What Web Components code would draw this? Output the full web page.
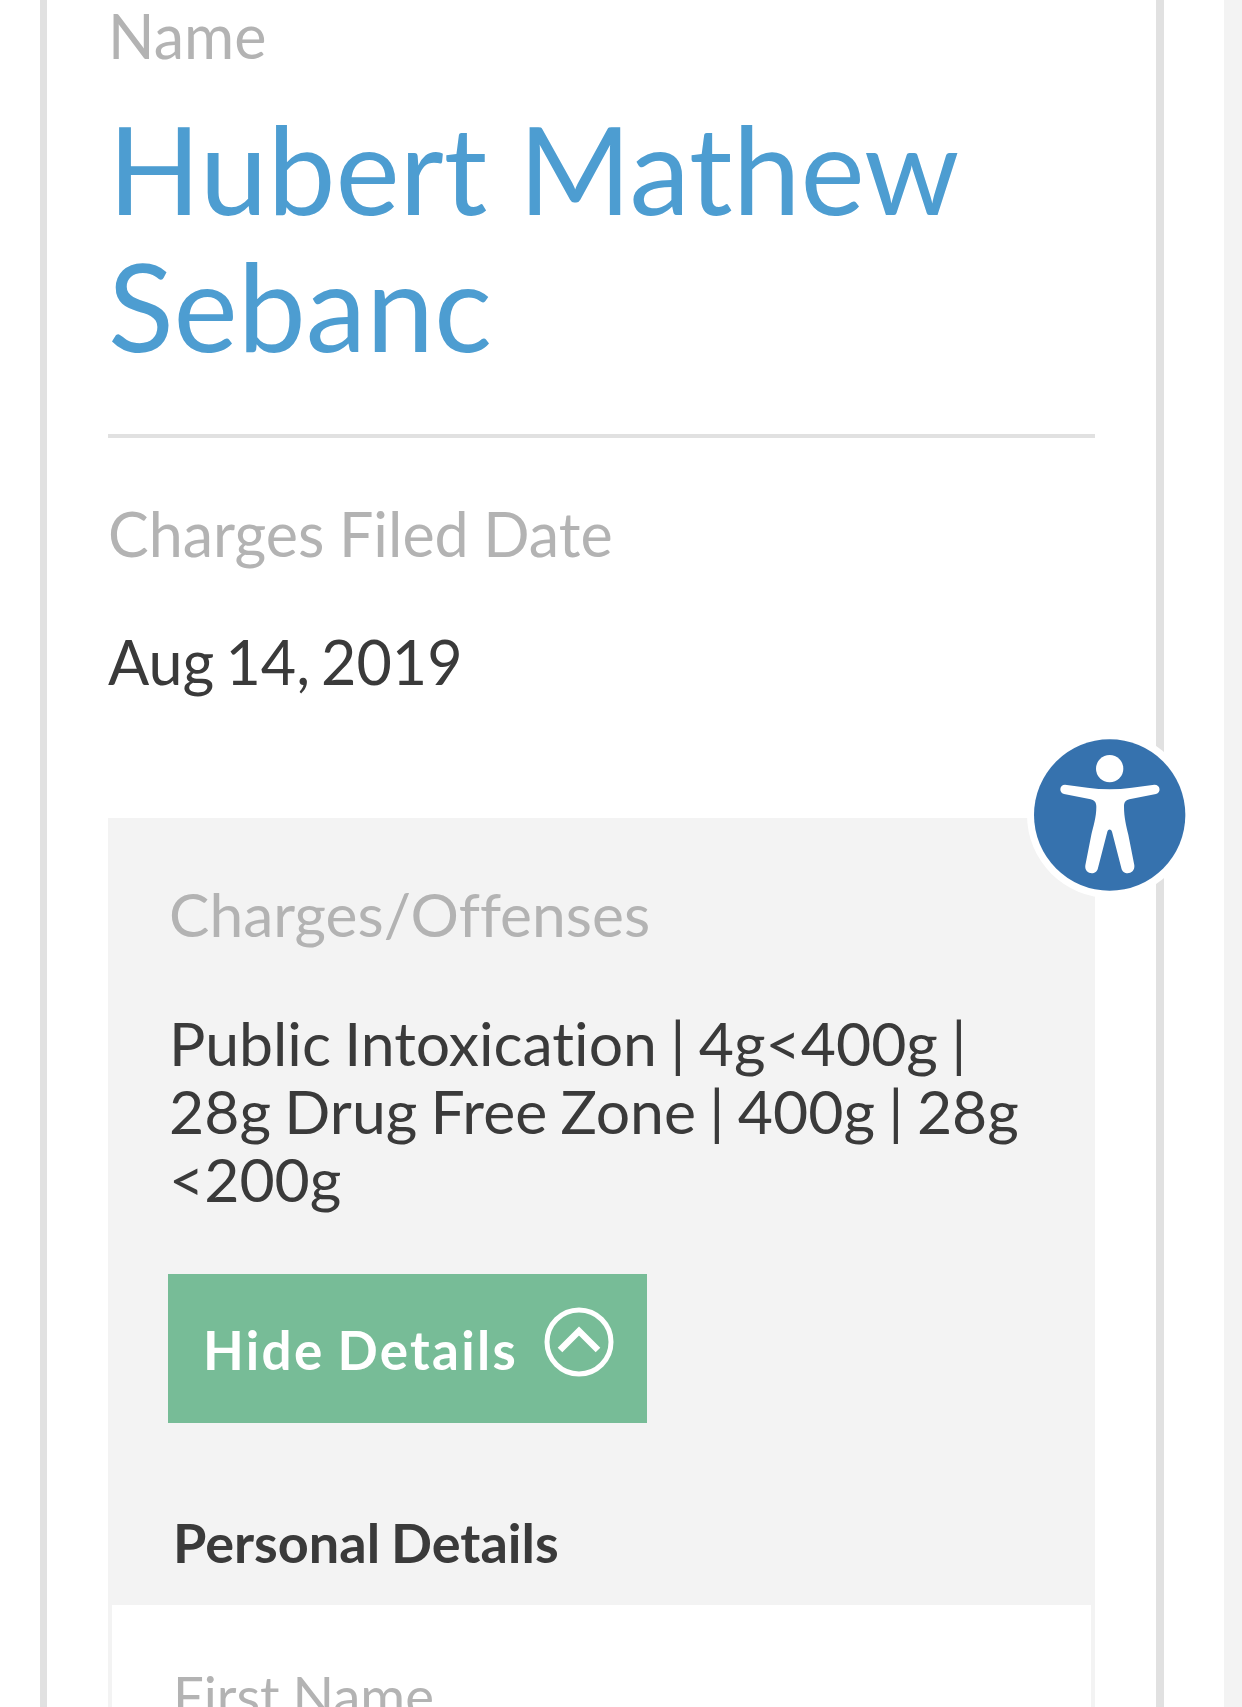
<!DOCTYPE html>
<html lang="en">
<head>
<meta charset="utf-8">
<title>Record</title>
<style>
  html, body { margin: 0; padding: 0; background: #f3f3f3; }
  body { height: 1707px; overflow: hidden; font-family: Lato, "Open Sans", sans-serif; color: #3a3a3a; font-variant-ligatures: none; word-spacing: -2.2px; }
</style>
</head>
<body>
<record-page>
  <record-field label="Name" kind="title">Hubert Mathew Sebanc</record-field>
  <record-divider></record-divider>
  <record-field label="Charges Filed Date">Aug 14, 2019</record-field>
  <charges-panel label="Charges/Offenses" text="Public Intoxication | 4g&lt;400g | 28g Drug Free Zone | 400g | 28g &lt;200g">
    <details-toggle label="Hide Details"></details-toggle>
    <span slot="heading">Personal Details</span>
    <record-field slot="details" label="First Name" style="--label-size: 54.5px"></record-field>
  </charges-panel>
</record-page>
<a11y-button></a11y-button>

<script>
/**
 * RecordPage - white column with the bordered card inside it.
 */
class RecordPage extends HTMLElement {
  constructor() {
    super();
    this.attachShadow({ mode: 'open' });
    this.shadowRoot.innerHTML = `
      <style>
        :host {
          display: block;
          box-sizing: border-box;
          width: 1224px;
          height: 1707px;
          overflow: hidden;
          padding: 0 60px 0 40px;
          background: #fff;
        }
        .card {
          box-sizing: border-box;
          min-height: 100%;
          border: solid #e1e1e1;
          border-width: 0 8px 0 7px;
          padding: 0 61px;
          background: #fff;
        }
      </style>
      <div class="card"><slot></slot></div>
    `;
  }
}

/**
 * RecordField - grey label with its value under it.
 */
class RecordField extends HTMLElement {
  constructor() {
    super();
    this.attachShadow({ mode: 'open' });
  }

  connectedCallback() {
    const label = this.getAttribute('label') || '';
    const title = this.getAttribute('kind') === 'title';
    this.shadowRoot.innerHTML = `
      <style>
        :host { display: block; }
        .label {
          font-size: var(--label-size, 61px);
          line-height: 72px;
          word-spacing: -1.1px;
          color: #b3b3b3;
        }
        .value {
          font-size: ${title ? '121.5px' : '61px'};
          line-height: ${title ? '137px' : '68px'};
          word-spacing: ${title ? '0' : '-4.5px'};
          color: ${title ? '#4d9dd1' : '#3a3a3a'};
          margin-top: ${title ? '28px' : '58px'};
        }
      </style>
      <div class="label">${label}</div>
      <div class="value"><slot></slot></div>
    `;
  }
}

class RecordDivider extends HTMLElement {
  constructor() {
    super();
    this.attachShadow({ mode: 'open' });
    this.shadowRoot.innerHTML = `
      <style>
        :host { display: block; height: 4px; background: #e1e1e1; margin: 60px 0 60px; }
      </style>
    `;
  }
}

/**
 * ChargesPanel - grey block with offenses, the toggle and the details.
 */
class ChargesPanel extends HTMLElement {
  constructor() {
    super();
    this.attachShadow({ mode: 'open' });
  }

  connectedCallback() {
    const label = this.getAttribute('label') || '';
    const text = (this.getAttribute('text') || '').replace(/</g, '&lt;');
    this.shadowRoot.innerHTML = `
      <style>
        :host {
          display: block;
          margin-top: 122px;
          padding: 60px 4px 0;
          background: #f3f3f3;
        }
        .top { padding: 0 56px 0 57px; }
        .label { font-size: 60.5px; line-height: 72px; color: #b3b3b3; }
        .text { font-size: 60.7px; line-height: 68px; color: #3a3a3a; margin-top: 59px; }
        .toggle { margin: 61px 0 0 -1px; }
        .heading {
          padding: 0 0 0 61px;
          margin-top: 86px;
          font-size: 54px;
          line-height: 68px;
          font-weight: 700;
          color: #3a3a3a;
        }
        .details {
          margin-top: 28px;
          padding: 54px 61px 0;
          background: #fff;
          min-height: 200px;
        }
      </style>
      <div class="top">
        <div class="label">${label}</div>
        <div class="text">${text}</div>
        <div class="toggle"><slot></slot></div>
      </div>
      <div class="heading"><slot name="heading"></slot></div>
      <div class="details"><slot name="details"></slot></div>
    `;
  }
}

class DetailsToggle extends HTMLElement {
  constructor() {
    super();
    this.attachShadow({ mode: 'open' });
  }

  connectedCallback() {
    const label = this.getAttribute('label') || '';
    this.shadowRoot.innerHTML = `
      <style>
        :host {
          display: inline-flex;
          box-sizing: border-box;
          width: 479px;
          height: 149px;
          align-items: center;
          padding: 2px 0 0 35px;
          background: #77bc97;
          color: #fff;
          font-size: 53px;
          font-weight: 700;
          letter-spacing: 2.3px;
        }
        svg { display: block; margin: -16px 0 0 26px; flex: none; }
      </style>
      <span>${label}</span>
      <svg width="70" height="70" viewBox="0 0 70 70" fill="none" stroke="#fff">
        <circle cx="35" cy="35" r="32" stroke-width="5"/>
        <path d="M16 43 L35 24 L54 43" stroke-width="6.5"/>
      </svg>
    `;
  }
}

/**
 * A11yButton - floating accessibility badge, lies over the card.
 */
class A11yButton extends HTMLElement {
  constructor() {
    super();
    this.attachShadow({ mode: 'open' });
    this.shadowRoot.innerHTML = `
      <style>
        :host {
          position: fixed;
          left: 1027px;
          top: 732px;
          width: 166px;
          height: 166px;
          box-sizing: border-box;
          border-radius: 50%;
          background: #fff;
          padding: 7px;
        }
        svg { display: block; }
      </style>
      <svg width="152" height="152" viewBox="72 55 456 456">
        <circle cx="299" cy="283" r="227" fill="#3672ae"/>
        <circle cx="299" cy="144" r="41" fill="#fff"/>
        <path fill="#fff" d="M165 192 C210 198 255 206 299 206 C343 206 388 198 433 192 C452 192 454 216 438 220 L358 236 C346 239 342 246 342 258 C342 290 349 316 355 342 L373 434 C376 462 338 466 334 442 L306 333 C303 324 295 324 292 333 L264 442 C260 466 222 462 226 434 L244 342 C250 316 259 290 259 258 C259 246 254 239 242 236 L162 220 C146 216 148 192 165 192 Z"/>
      </svg>
    `;
  }
}

customElements.define('record-page', RecordPage);
customElements.define('record-field', RecordField);
customElements.define('record-divider', RecordDivider);
customElements.define('charges-panel', ChargesPanel);
customElements.define('details-toggle', DetailsToggle);
customElements.define('a11y-button', A11yButton);
</script>
</body>
</html>
